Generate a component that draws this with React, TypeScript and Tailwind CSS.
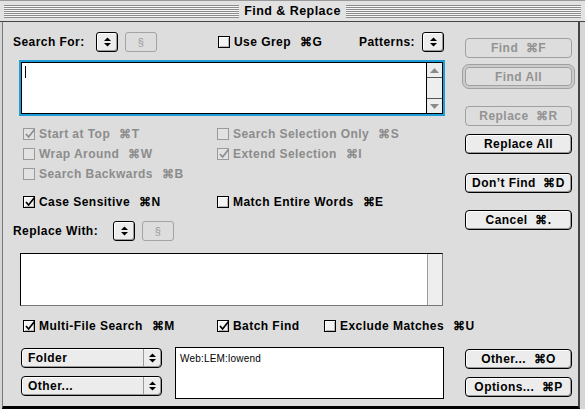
import clsx from "clsx";

const CMD = "\u2318";

function UpDown({ color = "#000" }: { color?: string }) {
  return (
    <svg width="7" height="10" viewBox="0 0 7 10">
      <path d="M0 4 L3.5 0.5 L7 4 Z" fill={color} />
      <path d="M0 6 L3.5 9.5 L7 6 Z" fill={color} />
    </svg>
  );
}

function ArrowButton() {
  return (
    <div className="flex h-[20px] w-[22px] shrink-0 items-center justify-center rounded-[3px] border border-black bg-[#ececec] shadow-[inset_1px_1px_0_#fff,inset_-1px_-1px_0_#9a9a9a]">
      <UpDown />
    </div>
  );
}

function SectionButton() {
  return (
    <div className="ml-[7px] flex h-[20px] w-[32px] shrink-0 items-center justify-center rounded-[3px] border border-[#a3a3a3] text-[11px] font-normal text-[#9a9a9a]">
      §
    </div>
  );
}

function Checkbox({ checked, disabled }: { checked?: boolean; disabled?: boolean }) {
  return (
    <span
      className={clsx(
        "relative inline-block h-[12px] w-[12px] shrink-0 border",
        disabled
          ? "border-[#9a9a9a] bg-[#e2e2e2]"
          : "border-black bg-[#f3f3f3] shadow-[inset_1px_1px_0_#fff,inset_-1px_-1px_0_#b5b5b5]",
      )}
    >
      {checked && (
        <svg className="absolute left-[0px] top-[-1px]" width="12" height="12" viewBox="0 0 12 12">
          <path
            d="M2 6 L4.6 9 L10.5 1.5"
            fill="none"
            stroke={disabled ? "#8c8c8c" : "#000"}
            strokeWidth="1.7"
          />
        </svg>
      )}
    </span>
  );
}

function CheckItem({
  label,
  shortcut,
  checked,
  disabled,
  className,
}: {
  label: string;
  shortcut?: string;
  checked?: boolean;
  disabled?: boolean;
  className?: string;
}) {
  return (
    <div
      className={clsx(
        "flex shrink-0 items-center whitespace-nowrap",
        disabled ? "text-[#8c8c8c]" : "text-black",
        className,
      )}
    >
      <Checkbox checked={checked} disabled={disabled} />
      <span className="ml-[4px]">{label}</span>
      {shortcut && (
        <span className="ml-[9px]">
          {CMD}
          {shortcut}
        </span>
      )}
    </div>
  );
}

function PushButton({ label, disabled }: { label: string; disabled?: boolean }) {
  return (
    <div
      className={clsx(
        "flex h-[20px] w-[107px] items-center justify-center whitespace-pre rounded-[4px] border",
        disabled
          ? "border-[#a0a0a0] text-[#939393]"
          : "border-black bg-[#ececec] text-black shadow-[inset_1px_1px_0_#fff,inset_-1px_-1px_0_#9a9a9a]",
      )}
    >
      {label}
    </div>
  );
}

function PopupMenu({ label, className }: { label: string; className?: string }) {
  return (
    <div
      className={clsx(
        "flex h-[20px] w-[141px] items-center rounded-[4px] border border-black bg-[#ececec] shadow-[inset_1px_1px_0_#fff,inset_-1px_-1px_0_#9a9a9a]",
        className,
      )}
    >
      <span className="flex-1 pl-[6px]">{label}</span>
      <div className="flex h-full w-[18px] items-center justify-center border-l border-[#9a9a9a]">
        <UpDown />
      </div>
    </div>
  );
}

export default function App() {
  return (
    <div className="flex h-[409px] w-[585px] flex-col overflow-hidden bg-[#d6d6d6] font-['Liberation_Sans',Arial,sans-serif] text-[12px] font-bold leading-none tracking-[0.45px]">
      {/* Title bar */}
      <div className="flex h-[22px] shrink-0 items-center border-b border-t border-b-[#444] border-t-[#9a9a9a] bg-[#e2e2e2] px-[4px]">
        <div className="h-[13px] flex-1 bg-[repeating-linear-gradient(to_bottom,#8c8c8c_0px,#8c8c8c_1px,#f6f6f6_1px,#f6f6f6_2px)]" />
        <span className="px-[5px] text-[12.5px] text-black">Find &amp; Replace</span>
        <div className="h-[13px] flex-1 bg-[repeating-linear-gradient(to_bottom,#8c8c8c_0px,#8c8c8c_1px,#f6f6f6_1px,#f6f6f6_2px)]" />
      </div>

      {/* Dialog body */}
      <div className="ml-[2px] mr-[5px] flex h-[387px] border-b-[3px] border-l border-r-2 border-b-black border-l-[#777] border-r-[#444] bg-[#dddddd]">
        <div className="ml-[10px] flex w-[432px] shrink-0 flex-col">
          {/* Search For row */}
          <div className="mt-[10px] flex h-[20px] items-center">
            <span className="w-[83px] shrink-0">Search For:</span>
            <ArrowButton />
            <SectionButton />
            <CheckItem className="ml-[61px]" label="Use Grep" shortcut="G" />
            <div className="ml-auto flex items-center">
              <span>Patterns:</span>
              <div className="ml-[7px] mr-[1px]">
                <ArrowButton />
              </div>
            </div>
          </div>

          {/* Search text */}
          <div className="ml-[6px] mt-[8px] h-[56px] w-[426px] border-2 border-[#1d9cd6]">
            <div className="flex h-full border border-black bg-white">
              <div className="flex-1">
                <div className="ml-[3px] mt-[3px] h-[12px] w-[1px] bg-black" />
              </div>
              <div className="flex w-[16px] flex-col border-l border-black bg-[#eeeeee]">
                <div className="flex h-[15px] items-center justify-center border-b border-[#555]">
                  <svg width="9" height="5" viewBox="0 0 9 5">
                    <path d="M0 5 L4.5 0 L9 5 Z" fill="#8a8a8a" />
                  </svg>
                </div>
                <div className="flex-1" />
                <div className="flex h-[15px] items-center justify-center border-t border-[#555]">
                  <svg width="9" height="5" viewBox="0 0 9 5">
                    <path d="M0 0 L4.5 5 L9 0 Z" fill="#8a8a8a" />
                  </svg>
                </div>
              </div>
            </div>
          </div>

          {/* Search options */}
          <div className="mt-[8px] flex flex-col pl-[10px]">
            <div className="flex h-[20px] items-center">
              <CheckItem className="w-[194px]" label="Start at Top" shortcut="T" checked disabled />
              <CheckItem label="Search Selection Only" shortcut="S" disabled />
            </div>
            <div className="flex h-[20px] items-center">
              <CheckItem className="w-[194px]" label="Wrap Around" shortcut="W" disabled />
              <CheckItem label="Extend Selection" shortcut="I" checked disabled />
            </div>
            <div className="flex h-[20px] items-center">
              <CheckItem label="Search Backwards" shortcut="B" disabled />
            </div>
            <div className="mt-[8px] flex h-[20px] items-center">
              <CheckItem className="w-[194px]" label="Case Sensitive" shortcut="N" checked />
              <CheckItem label="Match Entire Words" shortcut="E" />
            </div>
          </div>

          {/* Replace With row */}
          <div className="mt-[9px] flex h-[20px] items-center">
            <span className="w-[100px] shrink-0">Replace With:</span>
            <ArrowButton />
            <SectionButton />
          </div>

          {/* Replace text */}
          <div className="ml-[7px] mt-[12px] flex h-[53px] w-[423px] border border-black border-r-[#777] border-b-[#777] bg-white">
            <div className="flex-1" />
            <div className="w-[15px] border-l border-[#9a9a9a] bg-[#eeeeee]" />
          </div>

          {/* Multi-file */}
          <div className="mt-[10px] flex h-[20px] items-center pl-[10px]">
            <CheckItem className="w-[194px]" label="Multi-File Search" shortcut="M" checked />
            <CheckItem className="w-[107px]" label="Batch Find" checked />
            <CheckItem label="Exclude Matches" shortcut="U" />
          </div>

          <div className="mt-[11px] flex">
            <div className="ml-[8px] flex flex-col">
              <PopupMenu className="mt-[1px]" label="Folder" />
              <PopupMenu className="mt-[8px]" label="Other..." />
            </div>
            <div className="ml-[13px] h-[52px] w-[269px] border border-black bg-white px-[4px] pt-[6px] text-[10px] font-normal tracking-[0.2px]">
              Web:LEM:lowend
            </div>
          </div>
        </div>

        {/* Buttons */}
        <div className="ml-[20px] flex w-[107px] flex-col pb-[9px]">
          <div className="mt-[16px]">
            <PushButton label={`Find  ${CMD}F`} disabled />
          </div>
          <div className="-mx-[3px] mt-[6px] rounded-[7px] border border-[#a0a0a0] bg-[#cbcbcb] p-[2px]">
            <div className="flex h-[19px] items-center justify-center rounded-[4px] border border-[#a0a0a0] bg-[#dddddd] text-[#939393]">
              Find All
            </div>
          </div>
          <div className="mt-[17px]">
            <PushButton label={`Replace  ${CMD}R`} disabled />
          </div>
          <div className="mt-[8px]">
            <PushButton label="Replace All" />
          </div>
          <div className="mt-[19px]">
            <PushButton label={`Don\u2019t Find  ${CMD}D`} />
          </div>
          <div className="mt-[17px]">
            <PushButton label={`Cancel  ${CMD}.`} />
          </div>
          <div className="mt-auto">
            <PushButton label={`Other...  ${CMD}O`} />
          </div>
          <div className="mt-[8px]">
            <PushButton label={`Options...  ${CMD}P`} />
          </div>
        </div>
      </div>
    </div>
  );
}
